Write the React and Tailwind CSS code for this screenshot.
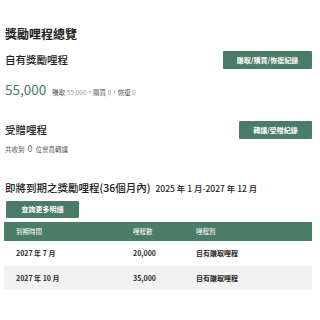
const rows = [
  { date: "2027 年 7 月", miles: "20,000", type: "自有賺取哩程" },
  { date: "2027 年 10 月", miles: "35,000", type: "自有賺取哩程" },
];

const font = { fontFamily: '"Noto Sans CJK TC", "Noto Sans", sans-serif' };

const GreenButton = ({ children, className = "" }) => (
  <button
    className={`flex items-center justify-center bg-[#4a7c68] text-white text-[7px] font-bold rounded-[1px] ${className}`}
  >
    {children}
  </button>
);

export default function App() {
  return (
    <div className="w-[320px] h-[320px] bg-white text-[#222] pl-[5px] pr-[8px] pt-[25px]" style={font}>
      <h1 className="text-[12px] font-semibold leading-[18px]">獎勵哩程總覽</h1>

      <div className="mt-[8px] flex items-center justify-between h-[18px]">
        <h2 className="text-[10.5px] font-medium">自有獎勵哩程</h2>
        <GreenButton className="w-[89px] h-[18px]">賺取/購買/恢復紀錄</GreenButton>
      </div>

      <div className="mt-[10px] flex items-baseline gap-[6px] h-[20px]">
        <span className="text-[13.5px] text-[#4a7c68] leading-[20px]">55,000</span>
        <span className="text-[6.5px] text-[#555]">
          賺取 <span className="text-[#999]">55,000</span>，購買 <span className="text-[#999]">0</span>，恢復 <span className="text-[#999]">0</span>
        </span>
      </div>

      <div className="mt-[22px] flex items-center justify-between h-[18px]">
        <h2 className="text-[10.5px] font-medium">受贈哩程</h2>
        <GreenButton className="w-[73px] h-[18px]">轉讓/受贈紀錄</GreenButton>
      </div>

      <div className="mt-[3px] flex items-baseline gap-[3px] text-[6.5px] text-[#555] h-[12px]">
        <span>共收到</span>
        <span className="text-[9px] text-[#4a7c68]">0</span>
        <span>位會員轉讓</span>
      </div>

      <div className="mt-[26px] flex items-baseline gap-[5px] h-[16px]">
        <h2 className="text-[10.5px] font-medium">即將到期之獎勵哩程(36個月內)</h2>
        <span className="text-[8.5px] font-medium">2025 年 1 月-2027 年 12 月</span>
      </div>

      <GreenButton className="mt-[5px] ml-[1px] w-[73px] h-[17px]">查詢更多明細</GreenButton>

      <div className="mt-[4px] -ml-[1px]">
        <div className="grid grid-cols-[117px_63px_1fr] items-center h-[19px] bg-[#4a7c68] text-white text-[6.5px] px-[12px]">
          <span>到期時間</span>
          <span>哩程數</span>
          <span>哩程別</span>
        </div>
        {rows.map((r, i) => (
          <div
            key={r.date}
            className={`grid grid-cols-[117px_63px_1fr] items-center h-[24.5px] text-[7px] font-semibold text-[#2a2a2a] px-[12px] ${i % 2 ? "bg-[#f2f2f2]" : "bg-white"}`}
          >
            <span className="text-[#2a2a2a]">{r.date}</span>
            <span className="text-[#2a2a2a]">{r.miles}</span>
            <span className="text-[#2a2a2a]">{r.type}</span>
          </div>
        ))}
      </div>
    </div>
  );
}
